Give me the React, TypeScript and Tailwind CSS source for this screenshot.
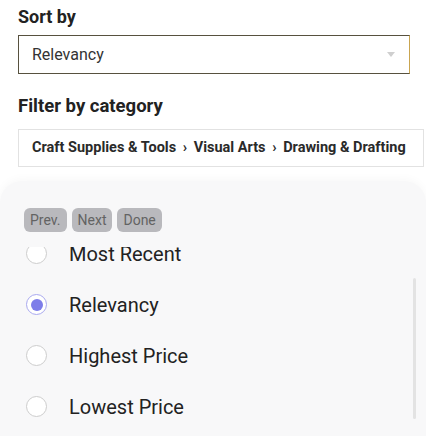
import React from "react";

const options = [
  { label: "Most Recent", selected: false },
  { label: "Relevancy", selected: true },
  { label: "Highest Price", selected: false },
  { label: "Lowest Price", selected: false },
];

function Radio({ selected }: { selected: boolean }) {
  return selected ? (
    <span className="flex h-[21px] w-[21px] items-center justify-center rounded-full border-[1.5px] border-[#a9a9ef] bg-white">
      <span className="h-[12px] w-[12px] rounded-full bg-[#7d7de9]" />
    </span>
  ) : (
    <span className="h-[21px] w-[21px] rounded-full border-[1.5px] border-[#cdcdcd] bg-white" />
  );
}

export default function App() {
  return (
    <div
      className="relative h-[436px] w-[426px] overflow-hidden bg-white"
      style={{ fontFamily: "Roboto, 'Liberation Sans', sans-serif" }}
    >
      <div className="px-[18px] pt-[5px]">
        <h2 className="text-[18px] font-bold leading-[24px] text-[#222]">Sort by</h2>
        <div className="mt-[6px] flex h-[39px] w-[392px] items-center justify-between border border-[#57513f] border-r-[#c9a550] bg-white pl-[13px] pr-[14px]">
          <span className="text-[16px] text-[#333]">Relevancy</span>
          <span className="h-0 w-0 border-x-[4px] border-t-[5px] border-x-transparent border-t-[#cfcfcf]" />
        </div>
        <h2 className="mt-[20px] text-[18.5px] font-bold leading-[24px] text-[#222]">Filter by category</h2>
        <div className="mt-[11px] flex h-[38px] w-[406px] items-center border border-[#e2e2e2] bg-white pl-[13px]">
          <span className="whitespace-nowrap text-[14.5px] font-bold text-[#2a2a2a]">
            Craft Supplies &amp; Tools <span className="mx-[3px]">›</span> Visual Arts{" "}
            <span className="mx-[3px]">›</span> Drawing &amp; Drafting
          </span>
        </div>
      </div>

      <div className="relative mt-[14px] h-[260px] rounded-t-[22px] bg-[#f8f8f9] shadow-[0_-2px_10px_rgba(0,0,0,0.03)]">
        <div className="flex gap-[5px] px-[24px] pt-[27px]">
          <button className="h-[24px] rounded-[6px] bg-[#b9b9bd] px-[6px] text-[14px] leading-[24px] text-[#636363]">Prev.</button>
          <button className="h-[24px] rounded-[6px] bg-[#b9b9bd] px-[6px] text-[14px] leading-[24px] text-[#636363]">Next</button>
          <button className="h-[24px] rounded-[6px] bg-[#b9b9bd] px-[6px] text-[14px] leading-[24px] text-[#636363]">Done</button>
        </div>
        <div className="relative mt-[15px] h-[190px] overflow-hidden">
          <div className="-mt-[19px]">
            {options.map((o) => (
              <div key={o.label} className="flex h-[51px] items-center pl-[26px]">
                <Radio selected={o.selected} />
                <span className="ml-[22px] text-[20px] text-[#222]">{o.label}</span>
              </div>
            ))}
          </div>
          <div className="absolute right-[10px] top-[31px] h-[141px] w-[3px] rounded-full bg-[#e3e3e3]" />
        </div>
      </div>
    </div>
  );
}
